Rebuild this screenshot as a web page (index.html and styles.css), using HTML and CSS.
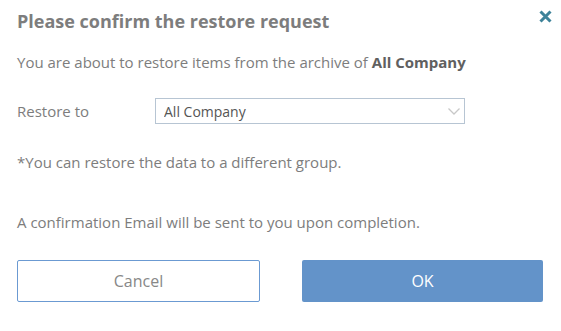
FILE: index.html
```html
<!DOCTYPE html>
<html lang="en">

<head>
    <meta charset="UTF-8">
    <meta name="viewport" content="width=device-width, initial-scale=1.0">
    <title>Restore request</title>
    <link rel="stylesheet" href="styles.css">
</head>

<body>
    <div class="dialog">
        <div class="dialog-header">
            <h2>Please confirm the restore request</h2>
            <button class="close-btn" aria-label="Close">
                <svg width="13" height="13" viewBox="0 0 13 13">
                    <path d="M1.5 1.5 L11.5 11.5 M11.5 1.5 L1.5 11.5" stroke="currentColor" stroke-width="3" stroke-linecap="butt" fill="none" />
                </svg>
            </button>
        </div>
        <p class="intro">You are about to restore items from the archive of <b>All Company</b></p>
        <div class="restore-row">
            <label for="restoreTo">Restore to</label>
            <div class="select-wrap">
                <select id="restoreTo" name="restoreTo">
                    <option value="all">All Company</option>
                </select>
                <svg class="chevron" width="12" height="7" viewBox="0 0 12 7">
                    <path d="M0.5 0.5 L6 6 L11.5 0.5" stroke="#c8c8c8" stroke-width="1.3" fill="none" />
                </svg>
            </div>
        </div>
        <p class="note">*You can restore the data to a different group.</p>
        <p class="confirm">A confirmation Email will be sent to you upon completion.</p>
        <div class="buttons">
            <button class="btn btn-cancel">Cancel</button>
            <button class="btn btn-ok">OK</button>
        </div>
    </div>
</body>

</html>
```

FILE: styles.css
```css
body {
    font-family: "Open Sans", Arial, sans-serif;
    margin: 0;
    padding: 0;
    background-color: #fff;
    color: #7d7d7d;
}

.dialog {
    width: 526px;
    padding: 9px 18px 0 17px;
}

.dialog-header {
    display: flex;
    justify-content: space-between;
    align-items: flex-start;
}

.dialog-header h2 {
    margin: 0;
    font-size: 18px;
    line-height: 24px;
    font-weight: 700;
    color: #7d7d7d;
}

.close-btn {
    background: none;
    border: none;
    padding: 0;
    margin: 1px -9px 0 0;
    color: #3d8299;
    cursor: pointer;
    height: 13px;
}

.close-btn svg {
    display: block;
}

p {
    font-size: 15px;
    line-height: 20px;
    margin: 0;
}

.intro {
    margin-top: 19px;
}

.intro b {
    color: #606060;
}

.restore-row {
    display: flex;
    align-items: center;
    margin-top: 26px;
    height: 26px;
    font-size: 15px;
}

.restore-row label {
    width: 138px;
    line-height: 20px;
}

.select-wrap {
    position: relative;
    width: 310px;
}

.select-wrap select {
    appearance: none;
    -webkit-appearance: none;
    width: 100%;
    height: 26px;
    padding: 0 8px;
    border: 1px solid #b7c5d3;
    border-radius: 0;
    background-color: #fff;
    font-family: inherit;
    font-size: 14px;
    color: #555;
    box-sizing: border-box;
}

.chevron {
    position: absolute;
    right: 5px;
    top: 10px;
    pointer-events: none;
}

.note {
    margin-top: 28px;
}

.confirm {
    margin-top: 40px;
}

.buttons {
    display: flex;
    gap: 42px;
    margin-top: 28px;
}

.btn {
    flex: 1;
    height: 42px;
    font-family: inherit;
    font-size: 16px;
    border-radius: 2px;
    cursor: pointer;
    box-sizing: border-box;
}

.btn-cancel {
    background-color: #fff;
    border: 1px solid #6b9ad2;
    color: #888;
}

.btn-ok {
    background-color: #6393c9;
    border: none;
    color: #fff;
}
```
